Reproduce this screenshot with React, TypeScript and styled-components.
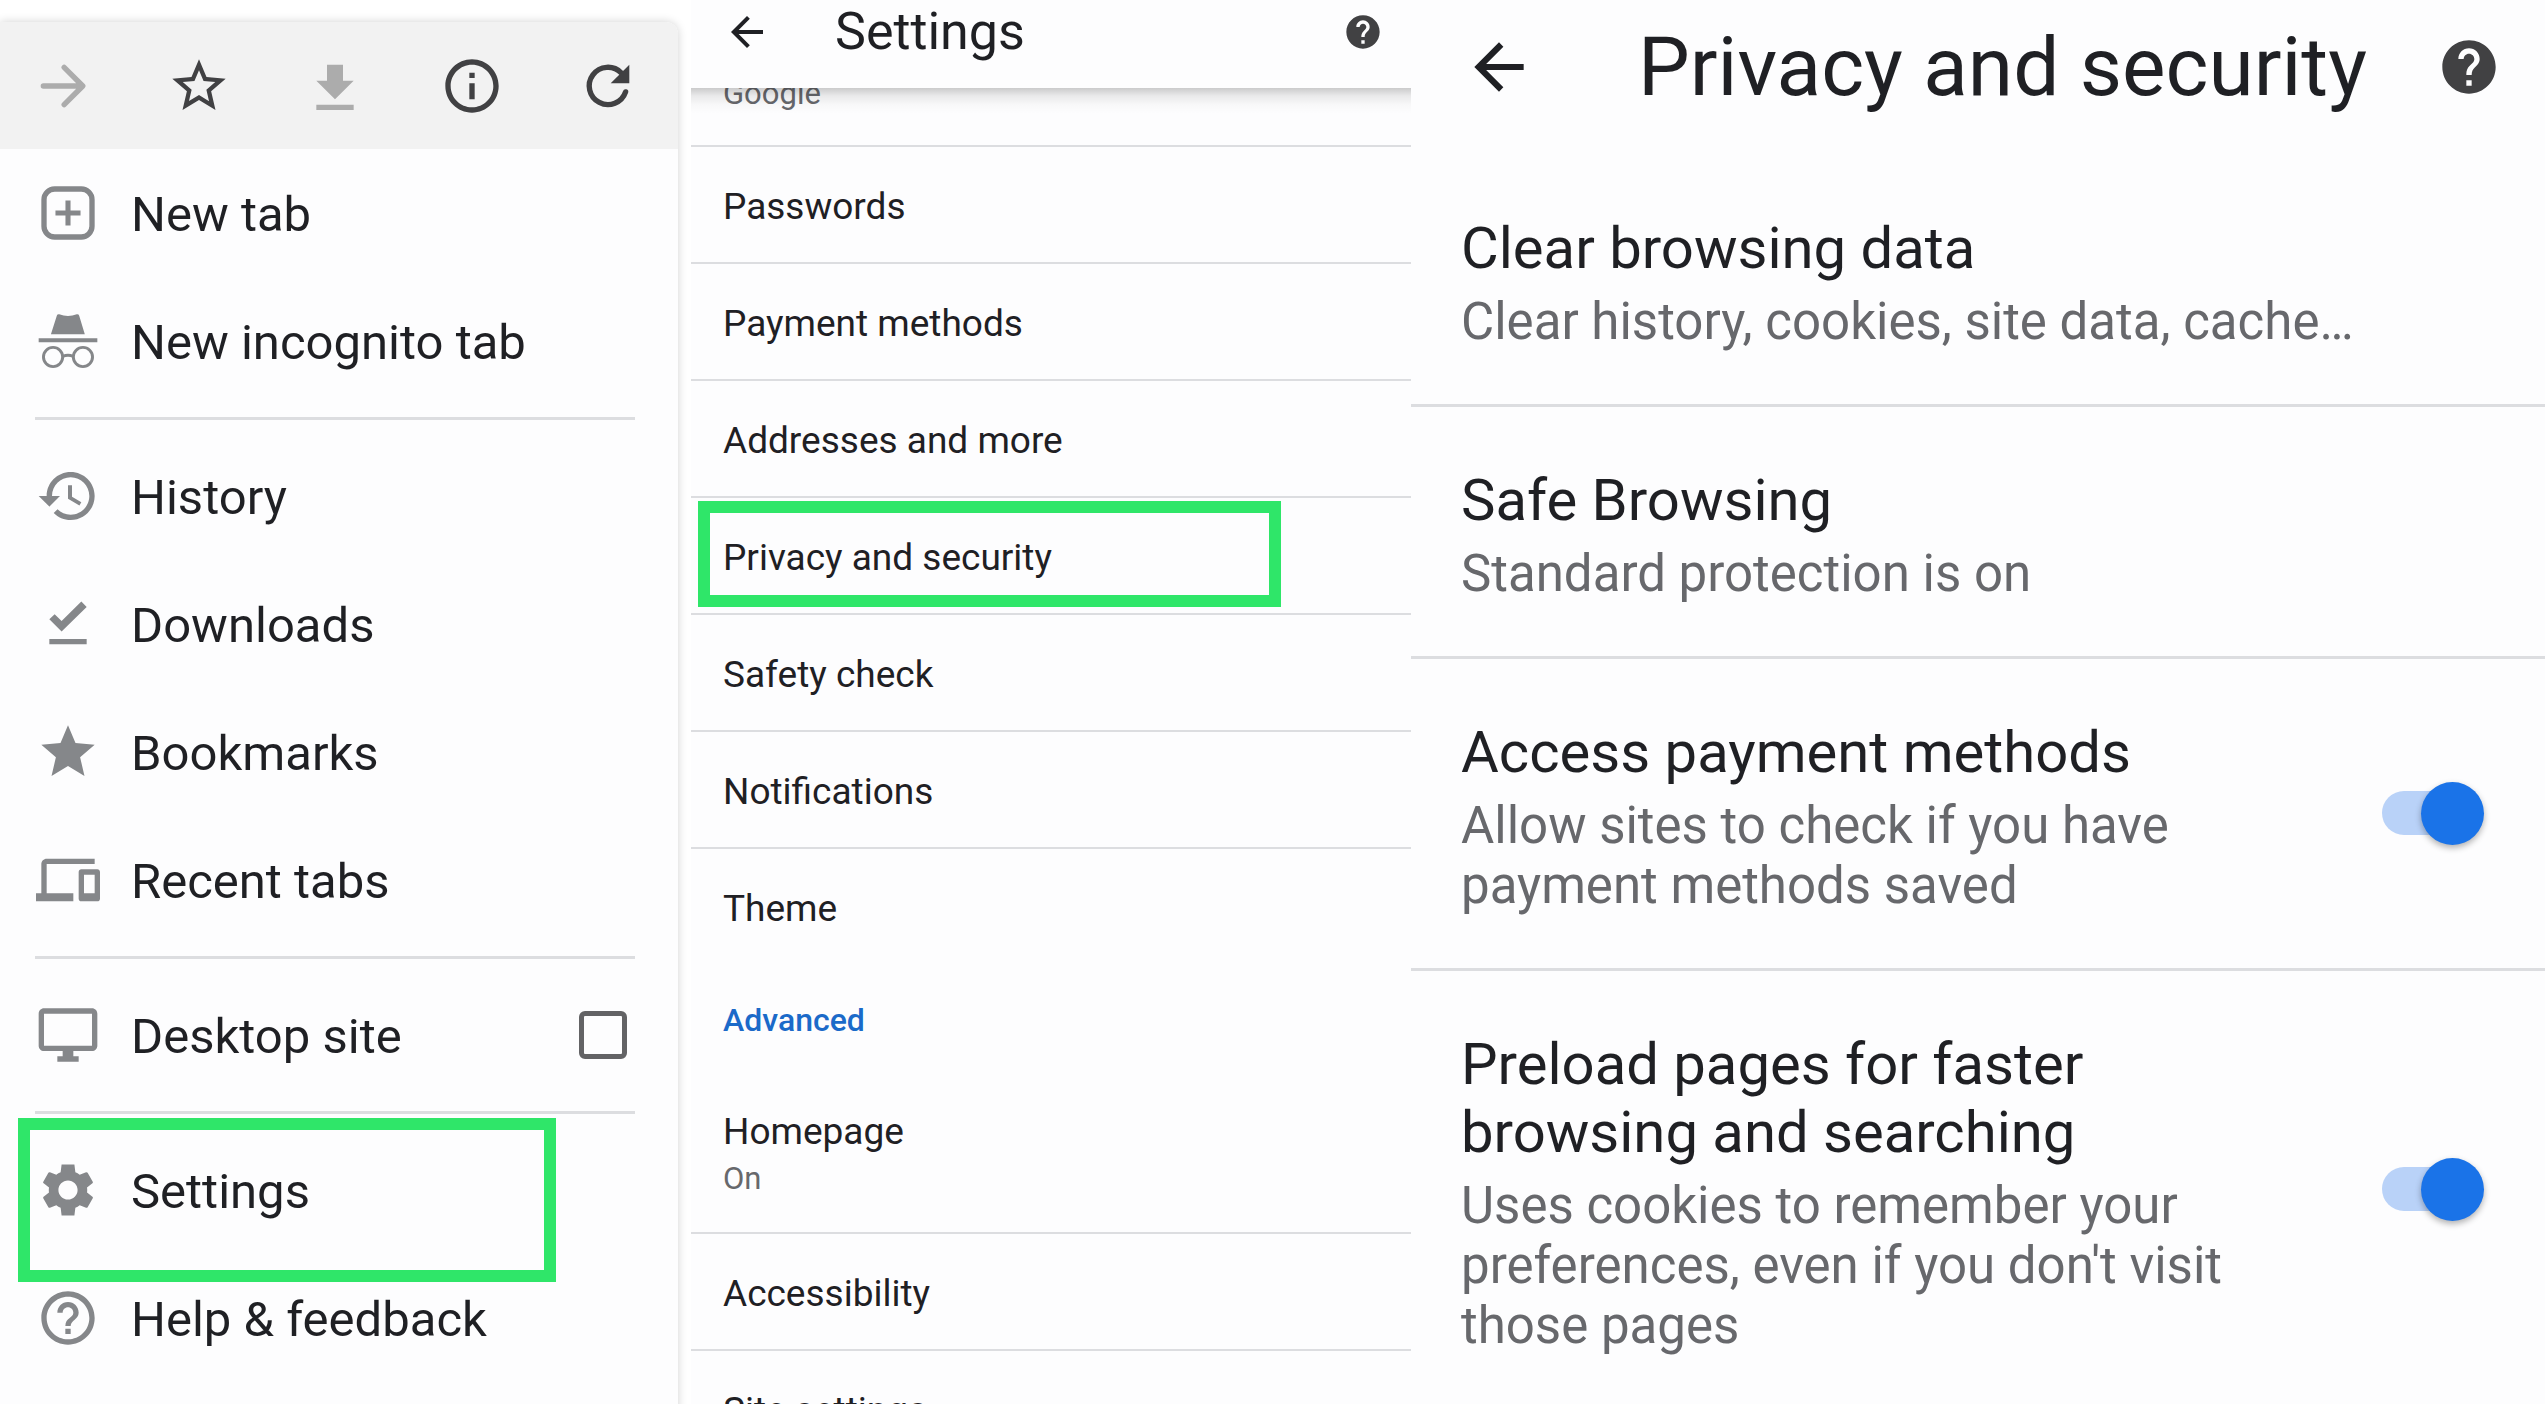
import React from "react";
import styled, { createGlobalStyle, css } from "styled-components";

const color = {
  text: "#1f2024",
  muted: "#67686c",
  icon: "#85878a",
  iconDark: "#414143",
  iconOff: "#acacac",
  line: "#dcdde0",
  page: "#fdfdfe",
  blue: "#1a73e8",
  link: "#1b6ac9",
  mark: "#2fe669",
};

const GlobalStyle = createGlobalStyle`
  *, *::before, *::after { box-sizing: border-box; }
  body {
    margin: 0;
    background: #fff;
    color: ${color.text};
    font-family: Roboto, "Liberation Sans", sans-serif;
  }
  button {
    margin: 0;
    padding: 0;
    border: 0;
    background: none;
    color: inherit;
    font: inherit;
    text-align: left;
    cursor: pointer;
  }
`;

const Screens = styled.div`
  display: grid;
  grid-template-columns: 691fr 720fr 1134fr;
  height: 100vh;
  overflow: hidden;
`;

/* ---------- shared ---------- */

const Svg = styled.svg<{ $size: number }>`
  display: block;
  flex: none;
  width: ${(p) => p.$size}px;
  height: ${(p) => p.$size}px;
  fill: currentColor;
`;

const stroke = (width: number, round = false) => ({
  fill: "none",
  stroke: "currentColor",
  strokeWidth: width,
  strokeLinecap: (round ? "round" : "butt") as "round" | "butt",
  strokeLinejoin: (round ? "round" : "miter") as "round" | "miter",
});

const shapes = {
  forward: <path d="M5 12h14M12.8 5l7 7-7 7" {...stroke(2, true)} />,
  starOutline: (
    <path d="M22 9.24l-7.19-.62L12 2 9.19 8.63 2 9.24l5.46 4.73L5.82 21 12 17.27 18.18 21l-1.63-7.03L22 9.24zM12 15.4l-3.76 2.27 1-4.28-3.32-2.88 4.38-.38L12 6.1l1.71 4.04 4.38.38-3.32 2.88 1 4.28L12 15.4z" />
  ),
  download: <path d="M19 10h-4V4H9v6H5l7 7 7-7zM5 19v2h14v-2H5z" />,
  info: (
    <path d="M11 7h2v2h-2zm0 4h2v6h-2zm1-9C6.48 2 2 6.48 2 12s4.48 10 10 10 10-4.48 10-10S17.52 2 12 2zm0 18c-4.41 0-8-3.59-8-8s3.59-8 8-8 8 3.59 8 8-3.59 8-8 8z" />
  ),
  reload: (
    <>
      <path d="M18.6 14.2A7 7 0 1 1 16.95 7.05" {...stroke(2, true)} />
      <path d="M20 4v7h-7z" />
    </>
  ),
  newTab: (
    <>
      <rect x="3" y="3" width="18" height="18" rx="4" {...stroke(2)} />
      <path d="M12 7.3v9.4M7.3 12h9.4" {...stroke(1.9)} />
    </>
  ),
  incognito: (
    <>
      <path d="M5.6 9.5l2.2-7q.2-.6.9-.5 3.3 1.2 6.6 0 .7-.1.9.5l2.1 7zM1 11h22v1.5H1z" />
      <circle cx="6.4" cy="18" r="3.6" {...stroke(1.1)} />
      <circle cx="17.6" cy="18" r="3.6" {...stroke(1.1)} />
      <path d="M10 17.8q2-.9 4 0" {...stroke(1.1)} />
    </>
  ),
  history: (
    <path d="M13 3c-4.97 0-9 4.03-9 9H1l3.89 3.89.07.14L9 12H6c0-3.87 3.13-7 7-7s7 3.13 7 7-3.13 7-7 7c-1.93 0-3.68-.79-4.94-2.06l-1.42 1.42C8.27 19.99 10.51 21 13 21c4.97 0 9-4.03 9-9s-4.03-9-9-9zm-1 5v5l4.28 2.54.72-1.21-3.5-2.08V8H12z" />
  ),
  downloadDone: (
    <path d="M5 17.6h14v2H5v-2zm4.6-2.8L5 10.2l2-1.9 2.6 2.6L17 3.6l2 2-9.4 9.2z" />
  ),
  star: (
    <path d="M12 17.27L18.18 21l-1.64-7.03L22 9.24l-7.19-.61L12 2 9.19 8.63 2 9.24l5.46 4.73L5.82 21z" />
  ),
  devices: (
    <path d="M4 6h18V4H4c-1.1 0-2 .9-2 2v11H0v3h14v-3H4V6zm19 2h-6c-.55 0-1 .45-1 1v10c0 .55.45 1 1 1h6c.55 0 1-.45 1-1V9c0-.55-.45-1-1-1zm-1 9h-4v-7h4v7z" />
  ),
  desktop: (
    <path d="M21 2H3c-1.1 0-2 .9-2 2v12c0 1.1.9 2 2 2h7v2H8v2h8v-2h-2v-2h7c1.1 0 2-.9 2-2V4c0-1.1-.9-2-2-2zm0 14H3V4h18v12z" />
  ),
  gear: (
    <path d="M19.14 12.94c.04-.3.06-.61.06-.94 0-.32-.02-.64-.07-.94l2.03-1.58c.18-.14.23-.41.12-.61l-1.92-3.32c-.12-.22-.37-.29-.59-.22l-2.39.96c-.5-.38-1.03-.7-1.62-.94l-.36-2.94h-4.8l-.36 2.94c-.59.24-1.13.57-1.62.94l-2.39-.96c-.22-.08-.47 0-.59.22L2.74 8.87c-.12.21-.08.47.12.61l2.03 1.58c-.05.3-.09.63-.09.94s.02.64.07.94l-2.03 1.58c-.18.14-.23.41-.12.61l1.92 3.32c.12.22.37.29.59.22l2.39-.96c.5.38 1.03.7 1.62.94l.36 2.95h4.8l.36-2.95c.59-.24 1.13-.56 1.62-.94l2.39.96c.22.08.47 0 .59-.22l1.92-3.32c.12-.22.07-.47-.12-.61l-2.01-1.58zM12 15.6c-1.98 0-3.6-1.62-3.6-3.6s1.62-3.6 3.6-3.6 3.6 1.62 3.6 3.6-1.62 3.6-3.6 3.6z" />
  ),
  helpOutline: (
    <path d="M11 18h2v-2h-2v2zm1-16C6.48 2 2 6.48 2 12s4.48 10 10 10 10-4.48 10-10S17.52 2 12 2zm0 18c-4.41 0-8-3.59-8-8s3.59-8 8-8 8 3.59 8 8-3.59 8-8 8zm0-14c-2.21 0-4 1.79-4 4h2c0-1.1.9-2 2-2s2 .9 2 2c0 2-3 1.75-3 5h2c0-2.25 3-2.5 3-5 0-2.21-1.79-4-4-4z" />
  ),
  help: (
    <path d="M12 2C6.48 2 2 6.48 2 12s4.48 10 10 10 10-4.48 10-10S17.52 2 12 2zm1 17h-2v-2h2v2zm2.07-7.75l-.9.92C13.45 12.9 13 13.5 13 15h-2v-.5c0-1.1.45-2.1 1.17-2.83l1.24-1.26c.37-.36.59-.86.59-1.41 0-1.1-.9-2-2-2s-2 .9-2 2H8c0-2.21 1.79-4 4-4s4 1.79 4 4c0 .88-.36 1.68-.93 2.25z" />
  ),
  back: <path d="M20 11H7.83l5.59-5.59L12 4l-8 8 8 8 1.41-1.41L7.83 13H20v-2z" />,
};

type Shape = keyof typeof shapes;

const Icon = ({ name, size = 64 }: { name: Shape; size?: number }) => (
  <Svg viewBox="0 0 24 24" $size={size} aria-hidden="true">
    {shapes[name]}
  </Svg>
);

const IconButton = styled.button<{ $color?: string }>`
  flex: none;
  color: ${(p) => p.$color ?? color.iconDark};
`;

/* A thick green frame drawn over the row it points out. */
const Highlight = styled.span<{ $top: number; $left: number; $width: number; $height: number }>`
  position: absolute;
  top: ${(p) => p.$top}px;
  left: ${(p) => p.$left}px;
  width: ${(p) => p.$width}px;
  height: ${(p) => p.$height}px;
  border: 12px solid ${color.mark};
  pointer-events: none;
`;

/* ---------- overflow menu ---------- */

const MenuColumn = styled.section`
  min-width: 0;
  padding: 22px 13px 0 0;
`;

const Menu = styled.div`
  height: 100%;
  border-top-right-radius: 12px;
  background: ${color.page};
  box-shadow: 0 0 10px rgba(0, 0, 0, 0.18);
`;

const Toolbar = styled.div`
  display: flex;
  justify-content: space-between;
  padding: 32px 38px 31px 30px;
  border-top-right-radius: 12px;
  background: #f2f2f2;
`;

const MenuRow = styled.div`
  position: relative;
  display: flex;
  align-items: center;
  height: 128px;
  padding: 0 51px 0 36px;
`;

const MenuAction = styled.button`
  display: flex;
  flex: 1;
  align-items: center;
  gap: 31px;
  color: ${color.icon};
`;

const MenuOption = styled.label`
  display: flex;
  flex: 1;
  align-items: center;
  gap: 31px;
  color: ${color.icon};
`;

const MenuText = styled.span`
  padding-top: 4px;
  color: ${color.text};
  font-size: 49px;
  line-height: 58px;
  white-space: nowrap;
`;

const MenuDivider = styled.hr`
  height: 3px;
  margin: 12px 43px 12px 35px;
  border: 0;
  background: ${color.line};
`;

const Checkbox = styled.input`
  flex: none;
  width: 48px;
  height: 48px;
  margin: 0;
  border: 5px solid #636365;
  border-radius: 6px;
  appearance: none;
`;

const tools: { name: Shape; label: string; off?: boolean }[] = [
  { name: "forward", label: "Forward", off: true },
  { name: "starOutline", label: "Bookmark" },
  { name: "download", label: "Download", off: true },
  { name: "info", label: "Page info" },
  { name: "reload", label: "Reload" },
];

const MenuItem = ({
  icon,
  text,
  children,
}: {
  icon: Shape;
  text: string;
  children?: React.ReactNode;
}) => (
  <MenuRow>
    <MenuAction type="button">
      <Icon name={icon} />
      <MenuText>{text}</MenuText>
    </MenuAction>
    {children}
  </MenuRow>
);

const OverflowMenu = () => (
  <MenuColumn>
    <Menu>
      <Toolbar>
        {tools.map((t) => (
          <IconButton
            key={t.name}
            type="button"
            aria-label={t.label}
            disabled={t.off}
            $color={t.off ? color.iconOff : color.iconDark}
          >
            <Icon name={t.name} />
          </IconButton>
        ))}
      </Toolbar>
      <MenuItem icon="newTab" text="New tab" />
      <MenuItem icon="incognito" text="New incognito tab" />
      <MenuDivider />
      <MenuItem icon="history" text="History" />
      <MenuItem icon="downloadDone" text="Downloads" />
      <MenuItem icon="star" text="Bookmarks" />
      <MenuItem icon="devices" text="Recent tabs" />
      <MenuDivider />
      <MenuRow>
        <MenuOption htmlFor="desktop-site">
          <Icon name="desktop" />
          <MenuText>Desktop site</MenuText>
        </MenuOption>
        <Checkbox id="desktop-site" type="checkbox" />
      </MenuRow>
      <MenuDivider />
      <MenuItem icon="gear" text="Settings">
        <Highlight $top={-8} $left={18} $width={538} $height={164} />
      </MenuItem>
      <MenuItem icon="helpOutline" text="Help & feedback" />
    </Menu>
  </MenuColumn>
);

/* ---------- settings list ---------- */

const Panel = styled.section`
  position: relative;
  min-width: 0;
  background: ${color.page};
`;

const SettingsHeader = styled.header`
  position: relative;
  z-index: 1;
  display: flex;
  align-items: center;
  gap: 64px;
  padding: 2px 28px 26px 32px;
  background: ${color.page};
`;

/* The shadow stays inside the panel and falls on the list only. */
const HeaderShadow = styled.div`
  position: absolute;
  top: 100%;
  left: 0;
  right: 0;
  height: 26px;
  background: linear-gradient(
    rgba(0, 0, 0, 0.2),
    rgba(0, 0, 0, 0.08) 30%,
    rgba(0, 0, 0, 0.02) 65%,
    transparent
  );
  pointer-events: none;
`;

const SettingsTitle = styled.h1`
  flex: 1;
  margin: 0;
  font-size: 52px;
  font-weight: 400;
  line-height: 60px;
`;

const settingsRow = css`
  position: relative;
  display: flex;
  flex-direction: column;
  width: 100%;
`;

const SettingsRow = styled.button<{ $last?: boolean }>`
  ${settingsRow}
  gap: 5px;
  padding: 38px 32px 33px;
  border-bottom: 2px solid ${(p) => (p.$last ? "transparent" : color.line)};
`;

/* Row scrolled most of the way under the header. */
const ScrolledRow = styled.div`
  ${settingsRow}
  justify-content: flex-end;
  height: 59px;
  padding: 0 32px 31px;
  border-bottom: 2px solid ${color.line};
  overflow: hidden;
`;

const RowText = styled.span`
  font-size: 37px;
  line-height: 44px;
`;

const RowSub = styled.span`
  color: ${color.muted};
  font-size: 31px;
  line-height: 40px;
`;

const SectionTitle = styled.h2`
  margin: 0;
  padding: 34px 32px 32px;
  color: ${color.link};
  font-size: 32px;
  font-weight: 500;
  line-height: 40px;
`;

const Settings = () => (
  <Panel>
    <SettingsHeader>
      <IconButton type="button" aria-label="Back" $color={color.text}>
        <Icon name="back" size={48} />
      </IconButton>
      <SettingsTitle>Settings</SettingsTitle>
      <IconButton type="button" aria-label="Help">
        <Icon name="help" size={40} />
      </IconButton>
      <HeaderShadow />
    </SettingsHeader>
    <ScrolledRow>
      <RowSub>Google</RowSub>
    </ScrolledRow>
    {["Passwords", "Payment methods", "Addresses and more"].map((text) => (
      <SettingsRow key={text} type="button">
        <RowText>{text}</RowText>
      </SettingsRow>
    ))}
    <SettingsRow type="button">
      <RowText>Privacy and security</RowText>
      <Highlight $top={3} $left={7} $width={583} $height={106} />
    </SettingsRow>
    {["Safety check", "Notifications"].map((text) => (
      <SettingsRow key={text} type="button">
        <RowText>{text}</RowText>
      </SettingsRow>
    ))}
    <SettingsRow type="button" $last>
      <RowText>Theme</RowText>
    </SettingsRow>
    <SectionTitle>Advanced</SectionTitle>
    <SettingsRow type="button">
      <RowText>Homepage</RowText>
      <RowSub>On</RowSub>
    </SettingsRow>
    {["Accessibility", "Site settings"].map((text) => (
      <SettingsRow key={text} type="button">
        <RowText>{text}</RowText>
      </SettingsRow>
    ))}
  </Panel>
);

/* ---------- privacy and security ---------- */

const PrivacyHeader = styled.header`
  display: flex;
  align-items: center;
  padding: 19px 44px 40px 51px;
`;

const PrivacyTitle = styled.h1`
  flex: 1;
  margin: 0 0 0 102px;
  font-size: 82px;
  font-weight: 400;
  line-height: 96px;
  white-space: nowrap;
`;

const privacyRow = css<{ $last?: boolean }>`
  display: flex;
  align-items: center;
  width: 100%;
  padding: 59px 61px 52px 50px;
  border-bottom: 3px solid ${(p) => (p.$last ? "transparent" : color.line)};
`;

const PrivacyLink = styled.button<{ $last?: boolean }>`
  ${privacyRow}
`;

const PrivacyToggle = styled.label<{ $last?: boolean }>`
  ${privacyRow}
  gap: 80px;
`;

const PrivacyText = styled.span`
  display: flex;
  flex: 1;
  flex-direction: column;
  gap: 10px;
  min-width: 0;
`;

const PrivacyName = styled.span`
  font-size: 58px;
  line-height: 68px;
`;

const PrivacySub = styled.span`
  color: ${color.muted};
  font-size: 51px;
  line-height: 60px;
`;

const Switch = styled.input`
  display: grid;
  flex: none;
  align-items: center;
  width: 102px;
  height: 63px;
  margin: 0 0 8px;
  appearance: none;

  &::before,
  &::after {
    grid-area: 1 / 1;
    content: "";
  }

  &::before {
    height: 44px;
    margin-right: 10px;
    border-radius: 22px;
    background: #c9ccd1;
  }

  &::after {
    width: 63px;
    height: 63px;
    border-radius: 50%;
    background: #f1f3f4;
    box-shadow: 0 3px 6px rgba(0, 0, 0, 0.3);
  }

  &:checked::before {
    background: #b9d2f8;
  }

  &:checked::after {
    justify-self: end;
    background: ${color.blue};
  }
`;

const Toggle = ({
  id,
  name,
  sub,
  last,
}: {
  id: string;
  name: string;
  sub: string;
  last?: boolean;
}) => (
  <PrivacyToggle htmlFor={id} $last={last}>
    <PrivacyText>
      <PrivacyName>{name}</PrivacyName>
      <PrivacySub>{sub}</PrivacySub>
    </PrivacyText>
    <Switch id={id} type="checkbox" role="switch" defaultChecked />
  </PrivacyToggle>
);

const Privacy = () => (
  <Panel>
    <PrivacyHeader>
      <IconButton type="button" aria-label="Back" $color={color.text}>
        <Icon name="back" size={74} />
      </IconButton>
      <PrivacyTitle>Privacy and security</PrivacyTitle>
      <IconButton type="button" aria-label="Help">
        <Icon name="help" />
      </IconButton>
    </PrivacyHeader>
    <PrivacyLink type="button">
      <PrivacyText>
        <PrivacyName>Clear browsing data</PrivacyName>
        <PrivacySub>Clear history, cookies, site data, cache…</PrivacySub>
      </PrivacyText>
    </PrivacyLink>
    <PrivacyLink type="button">
      <PrivacyText>
        <PrivacyName>Safe Browsing</PrivacyName>
        <PrivacySub>Standard protection is on</PrivacySub>
      </PrivacyText>
    </PrivacyLink>
    <Toggle
      id="payment-access"
      name="Access payment methods"
      sub="Allow sites to check if you have payment methods saved"
    />
    <Toggle
      id="preload"
      name="Preload pages for faster browsing and searching"
      sub="Uses cookies to remember your preferences, even if you don't visit those pages"
      last
    />
  </Panel>
);

export default function App() {
  return (
    <>
      <GlobalStyle />
      <Screens>
        <OverflowMenu />
        <Settings />
        <Privacy />
      </Screens>
    </>
  );
}
